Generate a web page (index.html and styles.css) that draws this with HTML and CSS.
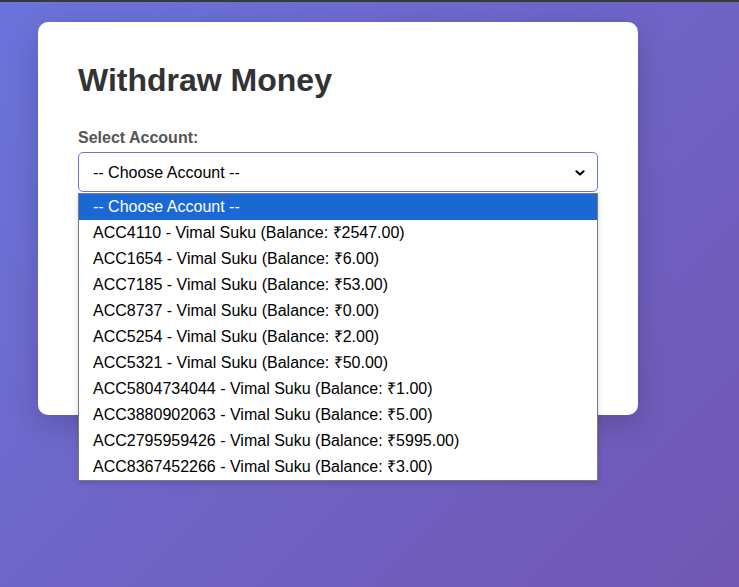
FILE: index.html
```html
<!DOCTYPE html>
<html lang="en">
<head>
<meta charset="utf-8">
<title>Withdraw Money</title>
<link rel="stylesheet" href="styles.css">
</head>
<body>
<div class="topbar"></div>
<main class="page">
  <section class="card">
    <h1 class="title">Withdraw Money</h1>
    <form class="form">
      <div class="group">
        <label class="label">Select Account:</label>
        <div class="select-wrap">
          <div class="select">
            <span>-- Choose Account --</span>
            <svg class="chevron" width="10" height="8" viewBox="0 0 10 8"><path d="M1.4 2.2 L5 5.6 L8.6 2.2" fill="none" stroke="#000" stroke-width="2" stroke-linecap="round" stroke-linejoin="round"/></svg>
          </div>
          <ul class="popup">
            <li class="opt active">-- Choose Account --</li>
            <li class="opt">ACC4110 - Vimal Suku (Balance: ₹2547.00)</li>
            <li class="opt">ACC1654 - Vimal Suku (Balance: ₹6.00)</li>
            <li class="opt">ACC7185 - Vimal Suku (Balance: ₹53.00)</li>
            <li class="opt">ACC8737 - Vimal Suku (Balance: ₹0.00)</li>
            <li class="opt">ACC5254 - Vimal Suku (Balance: ₹2.00)</li>
            <li class="opt">ACC5321 - Vimal Suku (Balance: ₹50.00)</li>
            <li class="opt">ACC5804734044 - Vimal Suku (Balance: ₹1.00)</li>
            <li class="opt">ACC3880902063 - Vimal Suku (Balance: ₹5.00)</li>
            <li class="opt">ACC2795959426 - Vimal Suku (Balance: ₹5995.00)</li>
            <li class="opt">ACC8367452266 - Vimal Suku (Balance: ₹3.00)</li>
          </ul>
        </div>
      </div>
      <div class="group">
        <div class="label-space"></div>
        <div class="input"></div>
      </div>
      <div class="button"></div>
    </form>
    <div class="back-space"></div>
  </section>
</main>
</body>
</html>
```
FILE: styles.css
```css
html, body {
  margin: 0;
  padding: 0;
}
body {
  min-height: 100vh;
  font-family: "Liberation Sans", Arial, sans-serif;
  background: linear-gradient(135deg, #6a74dc 0%, #6f64c6 50%, #7157b4 100%);
  background-attachment: fixed;
}
.topbar {
  height: 2px;
  background: #353b3b;
}
.page {
  padding: 20px 38px;
}
.card {
  width: 520px;
  padding: 40px;
  background: #fff;
  border-radius: 10px;
  box-shadow: 0 10px 30px rgba(0, 0, 0, 0.18);
}
.title {
  margin: 0 0 30px;
  font-size: 32px;
  line-height: 37px;
  font-weight: bold;
  color: #333;
}
.form {
  display: flex;
  flex-direction: column;
  gap: 20px;
}
.group {
  display: flex;
  flex-direction: column;
  gap: 5px;
}
.label {
  font-size: 16px;
  line-height: 18px;
  font-weight: bold;
  color: #555;
}
.label-space {
  height: 18px;
}
.select-wrap {
  position: relative;
}
.select {
  box-sizing: border-box;
  height: 40px;
  border: 1px solid #6a78d6;
  border-radius: 5px;
  padding: 1px 12px 0 14px;
  display: flex;
  align-items: center;
  justify-content: space-between;
  font-size: 16px;
  color: #000;
}
.chevron {
  display: block;
}
.popup {
  position: absolute;
  left: 0;
  right: 0;
  top: 41px;
  margin: 0;
  padding: 0;
  list-style: none;
  background: #fff;
  border: 1px solid #7a7a7a;
  box-shadow: 0 2px 6px rgba(0, 0, 0, 0.15);
  z-index: 5;
}
.opt {
  height: 26px;
  line-height: 26px;
  padding-left: 14px;
  font-size: 16px;
  color: #000;
  white-space: nowrap;
}
.opt.active {
  background: #1a68d4;
  color: #fff;
}
.input {
  height: 40px;
  box-sizing: border-box;
  border: 1px solid #ddd;
  border-radius: 5px;
}
.button {
  height: 50px;
  border-radius: 5px;
  background: #667eea;
}
.back-space {
  margin-top: 12px;
  height: 18px;
}
```
